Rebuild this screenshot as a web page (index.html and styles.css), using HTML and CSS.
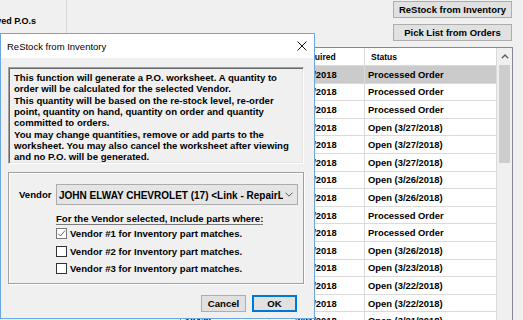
FILE: index.html
```html
<!DOCTYPE html>
<html>
<head>
<meta charset="utf-8">
<link rel="stylesheet" href="styles.css">
</head>
<body>
<div class="app">
  <div class="topbar">
    <div class="tab">Received P.O.s</div>
    <div class="actions">
      <button class="btn">ReStock from Inventory</button>
      <button class="btn">Pick List from Orders</button>
    </div>
  </div>
  <div class="grid">
    <div class="table">
      <div class="row head"><div class="c c1">P.O. #</div><div class="c c2">Date Required</div><div class="c c3">Status</div></div>
      <div class="row sel"><div class="c c1">10452</div><div class="c c2">3/28/2018</div><div class="c c3">Processed Order</div></div>
      <div class="row"><div class="c c1">10451</div><div class="c c2">3/28/2018</div><div class="c c3">Processed Order</div></div>
      <div class="row"><div class="c c1">10450</div><div class="c c2">3/28/2018</div><div class="c c3">Processed Order</div></div>
      <div class="row"><div class="c c1">10449</div><div class="c c2">3/27/2018</div><div class="c c3">Open (3/27/2018)</div></div>
      <div class="row"><div class="c c1">10448</div><div class="c c2">3/27/2018</div><div class="c c3">Open (3/27/2018)</div></div>
      <div class="row"><div class="c c1">10447</div><div class="c c2">3/27/2018</div><div class="c c3">Open (3/27/2018)</div></div>
      <div class="row"><div class="c c1">10446</div><div class="c c2">3/26/2018</div><div class="c c3">Open (3/26/2018)</div></div>
      <div class="row"><div class="c c1">10445</div><div class="c c2">3/26/2018</div><div class="c c3">Open (3/26/2018)</div></div>
      <div class="row"><div class="c c1">10444</div><div class="c c2">3/26/2018</div><div class="c c3">Processed Order</div></div>
      <div class="row"><div class="c c1">10443</div><div class="c c2">3/26/2018</div><div class="c c3">Processed Order</div></div>
      <div class="row"><div class="c c1">10442</div><div class="c c2">3/26/2018</div><div class="c c3">Open (3/26/2018)</div></div>
      <div class="row"><div class="c c1">10441</div><div class="c c2">3/23/2018</div><div class="c c3">Open (3/23/2018)</div></div>
      <div class="row"><div class="c c1">10440</div><div class="c c2">3/22/2018</div><div class="c c3">Open (3/22/2018)</div></div>
      <div class="row"><div class="c c1">10439</div><div class="c c2">3/22/2018</div><div class="c c3">Open (3/22/2018)</div></div>
      <div class="row"><div class="c c1">10438</div><div class="c c2">3/21/2018</div><div class="c c3">Open (3/21/2018)</div></div>
    </div>
    <div class="scroll">
      <div class="arrow"><svg width="8" height="5" viewBox="0 0 8 5"><path d="M0.8 4.3L4 1.1L7.2 4.3" fill="none" stroke="#606060" stroke-width="1.4"/></svg></div>
      <div class="thumb"></div>
    </div>
  </div>
</div>

<div class="dialog">
  <div class="titlebar">
    <span class="title">ReStock from Inventory</span>
    <svg class="close" width="10" height="10" viewBox="0 0 10 10"><path d="M0.5 0.5L9.5 9.5M9.5 0.5L0.5 9.5" stroke="#111" stroke-width="1"/></svg>
  </div>
  <div class="dbody">
    <div class="group1">
      <p>This function will generate a P.O. worksheet. A quantity to<br>order will be calculated for the selected Vendor.</p>
      <p>This quantity will be based on the re-stock level, re-order<br>point, quantity on hand, quantity on order and quantity<br>committed to orders.</p>
      <p>You may change quantities, remove or add parts to the<br>worksheet. You may also cancel the worksheet after viewing<br>and no P.O. will be generated.</p>
    </div>
    <div class="group2">
      <div class="vendor-row">
        <span class="vlabel">Vendor</span>
        <div class="combo">
          <span class="ctext">JOHN ELWAY CHEVROLET (17) &lt;Link - RepairLink&gt;</span>
          <svg class="chev" width="8" height="5" viewBox="0 0 8 5"><path d="M0.5 0.7L4 4.2L7.5 0.7" fill="none" stroke="#555" stroke-width="1"/></svg>
        </div>
      </div>
      <div class="includes">
        <span class="inc-title">For the Vendor selected, Include parts where:</span>
        <div class="cb"><span class="box checked"><svg width="9" height="9" viewBox="0 0 9 9"><path d="M1 4.6L3.4 7L8 1.6" fill="none" stroke="#666" stroke-width="1"/></svg></span>Vendor #1 for Inventory part matches.</div>
        <div class="cb"><span class="box"></span>Vendor #2 for Inventory part matches.</div>
        <div class="cb"><span class="box"></span>Vendor #3 for Inventory part matches.</div>
      </div>
    </div>
    <div class="buttons">
      <button class="dbtn">Cancel</button>
      <button class="dbtn ok">OK</button>
    </div>
  </div>
</div>
</body>
</html>
```

FILE: styles.css
```css
* { box-sizing: border-box; }
html, body { margin: 0; padding: 0; }
body {
  width: 523px;
  height: 320px;
  overflow: hidden;
  position: relative;
  background: #f0f0f0;
  font-family: "Liberation Sans", Arial, sans-serif;
  font-weight: bold;
  font-size: 9.5px;
  color: #000;
}

.app { display: flex; flex-direction: column; height: 100%; }

.topbar { display: flex; justify-content: space-between; height: 47px; flex: none; }

.tab {
  margin-left: -60px;
  width: 127px;
  height: 42px;
  border-right: 1px solid #d9d9d9;
  display: flex;
  align-items: center;
  justify-content: flex-end;
  padding-right: 30px;
  font-size: 9px;
  white-space: nowrap;
}

.actions {
  display: flex;
  flex-direction: column;
  gap: 6px;
  padding-top: 1px;
  margin-right: 11px;
}

.btn {
  width: 119px;
  height: 17px;
  padding: 0;
  margin: 0;
  background: #e1e1e1;
  border: 1px solid #adadad;
  font: inherit;
  color: #000;
  display: flex;
  align-items: center;
  justify-content: center;
  white-space: nowrap;
}

.grid {
  flex: 1;
  margin-left: 180px;
  margin-right: 10px;
  border: 1px solid #828790;
  border-bottom: none;
  background: #fff;
  display: flex;
  overflow: hidden;
}

.table { width: 316px; display: flex; flex-direction: column; font-size: 9.4px; }

.row {
  display: flex;
  height: 17.6px;
  flex: none;
  border-bottom: 1px solid #dadada;
}
.row.head { height: 18px; font-size: 8.5px; }
.row.sel { background: #cbcbcb; }

.c { display: flex; align-items: center; white-space: nowrap; overflow: hidden; }
.c1 { width: 89px; padding-left: 4px; border-right: 1px solid #dadada; }
.c2 { width: 95px; padding-left: 25px; border-right: 1px solid #dadada; }
.head .c2 { padding-left: 8px; }
.c3 { width: 132px; padding-left: 3px; border-right: 1px solid #dadada; }
.head .c3 { padding-left: 6px; }

.scroll {
  width: 15px;
  background: #f0f0f0;
  display: flex;
  flex-direction: column;
  align-items: center;
}
.arrow { height: 17px; display: flex; align-items: center; justify-content: center; }
.thumb { width: 11px; height: 98px; background: #cdcdcd; }

/* dialog */
.dialog {
  position: absolute;
  left: 0;
  top: 33px;
  width: 315px;
  height: 286px;
  border: 1px solid #6ba6e0;
  background: #f0f0f0;
  display: flex;
  flex-direction: column;
}

.titlebar {
  height: 24px;
  flex: none;
  background: #fff;
  display: flex;
  align-items: center;
  justify-content: space-between;
  padding: 0 7px 0 6px;
}
.title { font-weight: normal; font-size: 9.5px; white-space: nowrap; }
.close { display: block; }

.dbody {
  flex: 1;
  padding: 9px 10px 0 7px;
  display: flex;
  flex-direction: column;
  font-size: 9.6px;
}

.group1 {
  height: 97px;
  flex: none;
  padding: 3.5px 4px 0 5px;
  border: 1px solid;
  border-color: #a0a0a0 #ffffff #ffffff #a0a0a0;
  box-shadow: inset 1px 1px 0 #696969, inset -1px -1px 0 #e3e3e3;
  white-space: nowrap;
}
.group1 p { margin: 0 0 1px 0; line-height: 11px; }

.group2 {
  margin-top: 8px;
  height: 112px;
  flex: none;
  padding: 11px 0 0 10px;
  border: 1px solid #a0a0a0;
  box-shadow: 1px 1px 0 #fff, inset 1px 1px 0 #fff;
}

.vendor-row { display: flex; align-items: center; gap: 5px; }
.vlabel { width: 32px; white-space: nowrap; }
.combo {
  width: 242px;
  height: 21px;
  background: #e5e5e5;
  border: 1px solid #acacac;
  display: flex;
  align-items: center;
  padding: 0 3px 0 2px;
  font-size: 10px;
}
.ctext { flex: 1; overflow: hidden; white-space: nowrap; padding-top: 1px; }
.chev { flex: none; margin-left: 2px; margin-right: 1px; }

.includes { margin-left: 37px; margin-top: 8px; display: flex; flex-direction: column; align-items: flex-start; }
.inc-title {
  display: inline-block;
  line-height: 11px;
  border-bottom: 1px solid #7a7a7a;
  white-space: nowrap;
}
.cb { display: flex; align-items: center; height: 17.5px; gap: 3px; white-space: nowrap; }
.box {
  width: 11px;
  height: 11px;
  background: #fff;
  border: 1px solid #333;
  display: flex;
  align-items: center;
  justify-content: center;
}
.box.checked { border-color: #777; }

.buttons {
  margin-top: 11px;
  display: flex;
  justify-content: flex-end;
  gap: 6px;
  padding-right: 7px;
}
.dbtn {
  width: 45px;
  height: 17px;
  padding: 0;
  margin: 0;
  background: #e1e1e1;
  border: 1px solid #adadad;
  font: inherit;
  color: #000;
}
.dbtn.ok { border-color: #0078d7; box-shadow: inset 0 0 0 1px #0078d7; }
```
